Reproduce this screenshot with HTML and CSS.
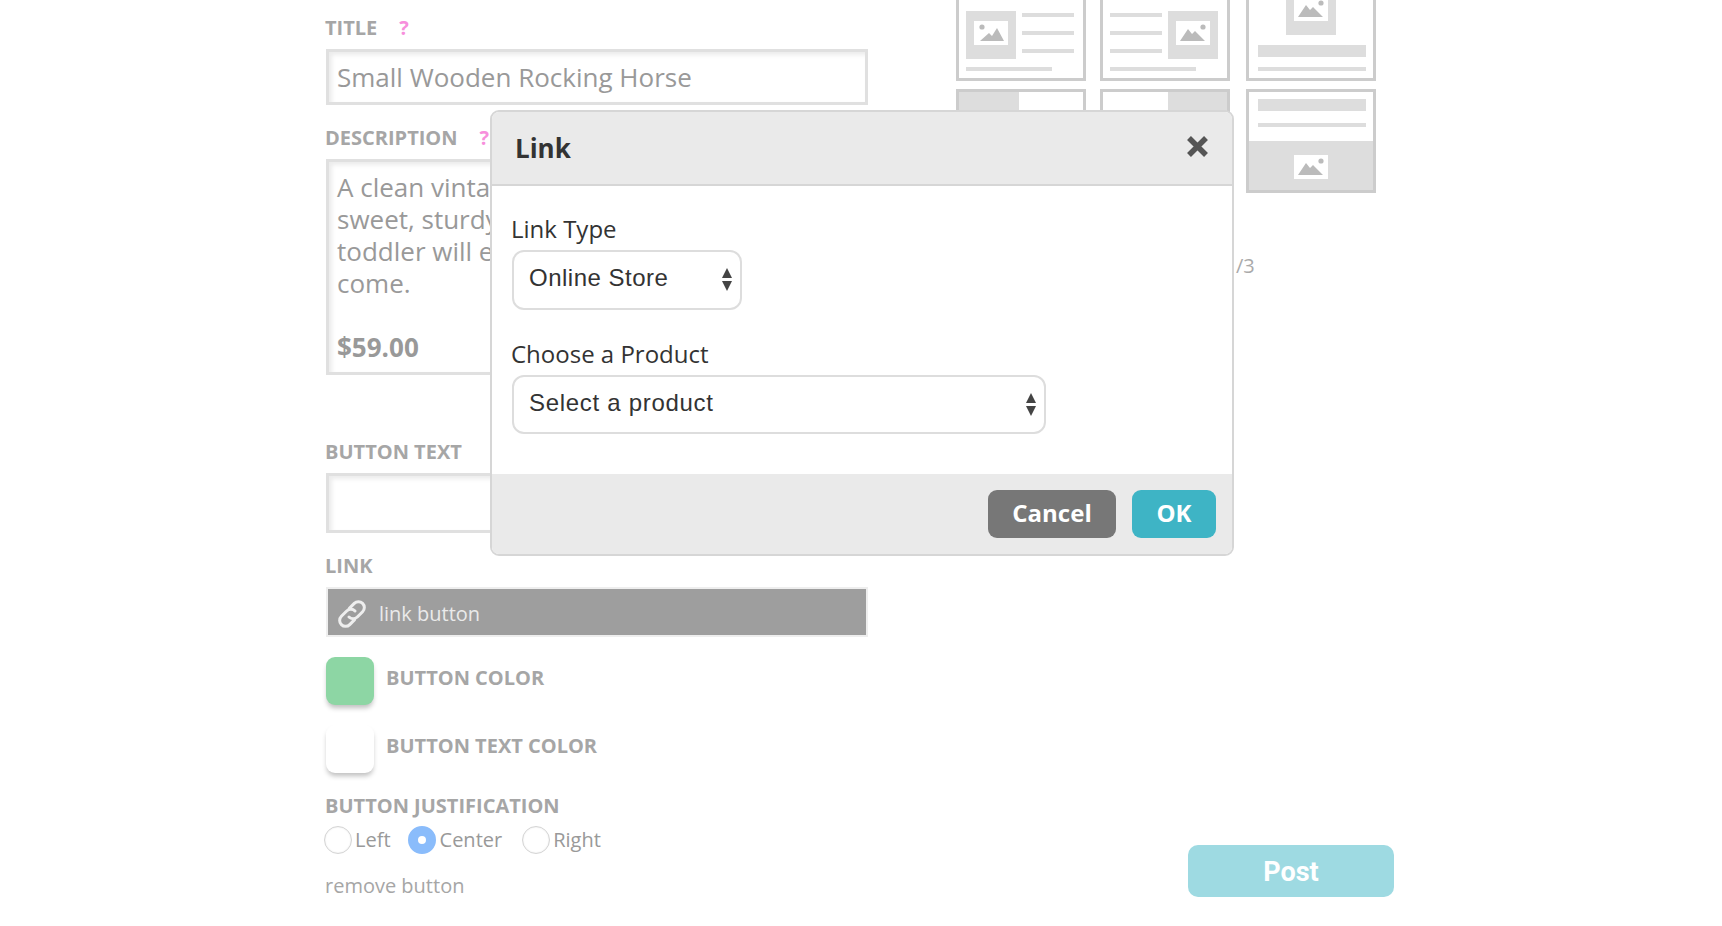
FILE: index.html
```html
<!DOCTYPE html>
<html lang="en">
<head>
<meta charset="utf-8">
<title>Link</title>
<link rel="stylesheet" href="styles.css">
</head>
<body>
<svg class="defs" width="0" height="0" aria-hidden="true">
  <defs>
    <g id="pic-r">
      <rect width="34" height="24" fill="#fff"/>
      <circle cx="27" cy="6" r="2.6" fill="#bbb"/>
      <path d="M4 20 L12 8 L16 13 L19 10 L29 20 Z" fill="#bbb"/>
    </g>
    <g id="pic-l">
      <rect width="34" height="24" fill="#fff"/>
      <circle cx="8" cy="6" r="2.6" fill="#bbb"/>
      <path d="M6 20 L15 12 L18 15 L23 7 L30 20 Z" fill="#bbb"/>
    </g>
  </defs>
</svg>
<main class="layout">
  <section class="form">
    <div class="label title-label">TITLE<span class="help">?</span></div>
    <div class="field field-title">Small Wooden Rocking Horse</div>
    <div class="label desc-label">DESCRIPTION<span class="help">?</span></div>
    <div class="field field-desc">A clean vinta<br>sweet, sturdy<br>toddler will e<br>come.<br><br><b>$59.00</b></div>
    <div class="label btn-label">BUTTON TEXT</div>
    <div class="field field-btn"></div>
    <div class="label link-label">LINK</div>
    <div class="link-bar">
      <svg class="link-icon" viewBox="0 0 28 28" fill="none" stroke="#eee" stroke-width="2.8" stroke-linecap="round"><g transform="rotate(-45 14 14)"><path d="M12 19.5 H5.5 a5.5 5.5 0 0 1 0-11 H12.5 a5.5 5.5 0 0 1 5.5 5.5"/><path d="M16 8.5 H22.5 a5.5 5.5 0 0 1 0 11 H15.5 a5.5 5.5 0 0 1 -5.5 -5.5"/></g></svg>
      <span>link button</span>
    </div>
    <div class="color-row">
      <div class="swatch swatch-green"></div>
      <div class="label">BUTTON COLOR</div>
    </div>
    <div class="color-row color-row-second">
      <div class="swatch swatch-white"></div>
      <div class="label">BUTTON TEXT COLOR</div>
    </div>
    <div class="label just-label">BUTTON JUSTIFICATION</div>
    <div class="radios">
      <div class="radio-item radio-item-left"><span class="radio"></span>Left</div>
      <div class="radio-item"><span class="radio radio-on"></span>Center</div>
      <div class="radio-item"><span class="radio"></span>Right</div>
    </div>
    <div class="remove">remove button</div>
  </section>
  <section class="side">
    <div class="thumbs">
      <svg class="thumb" viewBox="0 0 130 104"><rect x="1.5" y="1.5" width="127" height="101" fill="#fff" stroke="#ccc" stroke-width="3"/><rect x="10" y="34" width="50" height="48" fill="#ddd"/><use href="#pic-l" x="18" y="44"/><rect x="66" y="36" width="52" height="4" fill="#ddd"/><rect x="66" y="54" width="52" height="4" fill="#ddd"/><rect x="66" y="72" width="52" height="4" fill="#ddd"/><rect x="10" y="90" width="86" height="4" fill="#ddd"/></svg>
      <svg class="thumb" viewBox="0 0 130 104"><rect x="1.5" y="1.5" width="127" height="101" fill="#fff" stroke="#ccc" stroke-width="3"/><rect x="68" y="34" width="50" height="48" fill="#ddd"/><use href="#pic-r" x="76" y="44"/><rect x="10" y="36" width="52" height="4" fill="#ddd"/><rect x="10" y="54" width="52" height="4" fill="#ddd"/><rect x="10" y="72" width="52" height="4" fill="#ddd"/><rect x="10" y="90" width="86" height="4" fill="#ddd"/></svg>
      <svg class="thumb" viewBox="0 0 130 104"><rect x="1.5" y="1.5" width="127" height="101" fill="#fff" stroke="#ccc" stroke-width="3"/><rect x="40" y="10" width="50" height="48" fill="#ddd"/><use href="#pic-r" x="48" y="20"/><rect x="12" y="68" width="108" height="12" fill="#ddd"/><rect x="12" y="90" width="108" height="4" fill="#ddd"/></svg>
      <svg class="thumb" viewBox="0 0 130 104"><rect x="1.5" y="1.5" width="127" height="101" fill="#fff" stroke="#ccc" stroke-width="3"/><rect x="3" y="3" width="60" height="98" fill="#ddd"/></svg>
      <svg class="thumb" viewBox="0 0 130 104"><rect x="1.5" y="1.5" width="127" height="101" fill="#fff" stroke="#ccc" stroke-width="3"/><rect x="68" y="3" width="59" height="98" fill="#ddd"/></svg>
      <svg class="thumb" viewBox="0 0 130 104"><rect x="1.5" y="1.5" width="127" height="101" fill="#fff" stroke="#ccc" stroke-width="3"/><rect x="12" y="10" width="108" height="12" fill="#ddd"/><rect x="12" y="34" width="108" height="4" fill="#ddd"/><rect x="3" y="52" width="124" height="49" fill="#ddd"/><use href="#pic-r" x="48" y="66"/></svg>
    </div>
    <div class="counter">/3</div>
    <button class="post">Post</button>
  </section>
</main>
<div class="modal">
  <header class="modal-head">
    <h2>Link</h2>
    <svg class="close" viewBox="0 0 21 21" stroke="#555" stroke-width="5.5"><path d="M2 2 L19 19 M19 2 L2 19"/></svg>
  </header>
  <div class="modal-body">
    <div class="m-label">Link Type</div>
    <div class="select select-type">Online Store<span class="arrows"><i class="up"></i><i class="down"></i></span></div>
    <div class="m-label m-label-second">Choose a Product</div>
    <div class="select select-product">Select a product<span class="arrows"><i class="up"></i><i class="down"></i></span></div>
  </div>
  <footer class="modal-foot">
    <button class="btn btn-cancel">Cancel</button>
    <button class="btn btn-ok">OK</button>
  </footer>
</div>
</body>
</html>
```
FILE: styles.css
```css
* { box-sizing: border-box; }
html, body { margin: 0; height: 926px; overflow: hidden; }
body { background: #fff; font-family: "Open Sans", sans-serif; color: #999; position: relative; }
.defs { position: absolute; }
.layout { display: flex; padding: 14px 0 0 326px; }
.form { width: 542px; flex: none; }
.label { font-size: 20px; line-height: 28px; font-weight: 700; color: #a6a6a6; text-indent: -1px; }
.help { color: #f78fdc; margin-left: 22px; }
.field { border: 3px solid #e0e0e0; background: #fff; box-shadow: inset 3px 3px 4px rgba(0,0,0,.08); padding-left: 8px; font-size: 26px; color: #999; }
.field-title { height: 56px; margin-top: 7px; line-height: 50px; }
.desc-label { margin-top: 19px; }
.field-desc { height: 216px; margin-top: 7px; line-height: 32px; padding-top: 9px; }
.btn-label { margin-top: 63px; }
.field-btn { height: 60px; margin-top: 7px; }
.link-label { margin-top: 19px; }
.link-bar { height: 50px; margin-top: 7px; background: #9e9e9e; border: 2px solid #eee; display: flex; align-items: center; padding: 3px 0 0 9px; font-size: 20px; color: #eaeaea; }
.link-icon { width: 30px; height: 30px; margin-right: 12px; }
.color-row { display: flex; margin-top: 20px; gap: 13px; }
.swatch { width: 48px; height: 48px; border-radius: 9px; box-shadow: 0 4px 5px -1px rgba(0,0,0,.25); flex: none; }
.swatch-green { background: #8dd6a4; }
.swatch-white { background: #fff; }
.color-row .label { margin-top: 7px; }
.just-label { margin-top: 19px; }
.radios { display: flex; margin-top: 6px; margin-left: -2px; font-size: 20px; line-height: 28px; color: #999; }
.radio-item { display: flex; align-items: center; gap: 3px; margin-right: 20px; }
.radio-item-left { margin-right: 17px; }
.radio { width: 28px; height: 28px; border-radius: 50%; border: 1px solid #d4d4d4; background: #fff; box-shadow: inset 0 0 2px rgba(0,0,0,.1); display: block; }
.radio-on { border: 10px solid #8abcfb; box-shadow: none; margin-right: 1px; }
.remove { margin-top: 18px; font-size: 20px; line-height: 28px; color: #a6a6a6; text-indent: -1px; }
.side { margin: -37px 0 0 88px; width: 438px; display: flex; flex-direction: column; }
.thumbs { display: grid; grid-template-columns: 144px 146px 130px; row-gap: 8px; }
.thumb { width: 130px; height: 104px; display: block; filter: blur(.3px); }
.counter { margin-top: 59px; padding-left: 280px; font-size: 20px; line-height: 28px; color: #aaa; }
.post { align-self: flex-end; width: 206px; height: 52px; margin-top: 565px; border: 0; border-radius: 10px; background: #9edae2; color: #fff; font: 700 27px "Roboto", sans-serif; padding-top: 2px; }
.modal { position: absolute; left: 490px; top: 110px; width: 744px; height: 446px; border: 2.5px solid #d6d6d6; border-radius: 9px; background: #fff; display: flex; flex-direction: column; overflow: hidden; color: #333; }
.modal-head { height: 74px; flex: none; background: #eaeaea; border-bottom: 2px solid #d6d6d6; display: flex; align-items: center; justify-content: space-between; padding: 0 24px 0 23px; }
.modal-head h2 { margin: 0; font-size: 26px; font-weight: 700; color: #333; }
.close { width: 21px; height: 21px; margin-bottom: 4px; }
.modal-body { flex: 1; padding: 26px 0 0 20px; }
.m-label { font-size: 24px; line-height: 34px; color: #333; text-indent: -1px; }
.m-label-second { margin-top: 27px; }
.select { position: relative; margin-top: 4px; height: 59px; border: 2px solid #ddd; border-radius: 12px; font-family: "Liberation Sans", sans-serif; font-size: 24px; letter-spacing: .5px; line-height: 52px; padding-left: 15px; color: #333; background: #fff; }
.select-type { width: 230px; height: 60px; }
.select-product { width: 534px; letter-spacing: .7px; line-height: 51px; }
.arrows { position: absolute; right: 8px; top: 16px; display: flex; flex-direction: column; gap: 3px; }
.arrows i { display: block; width: 0; height: 0; border-left: 5.5px solid transparent; border-right: 5.5px solid transparent; }
.arrows .up { border-bottom: 10px solid #444; }
.arrows .down { border-top: 10px solid #444; }
.modal-foot { height: 80px; flex: none; background: #eaeaea; display: flex; justify-content: flex-end; align-items: flex-start; gap: 16px; padding: 16px 16px 0 0; }
.btn { height: 48px; border: 0; border-radius: 9px; color: #fff; font: 700 24px "Open Sans", sans-serif; padding-bottom: 4px; }
.btn-cancel { width: 128px; background: #777; }
.btn-ok { width: 84px; background: #3eb4c5; }
```
